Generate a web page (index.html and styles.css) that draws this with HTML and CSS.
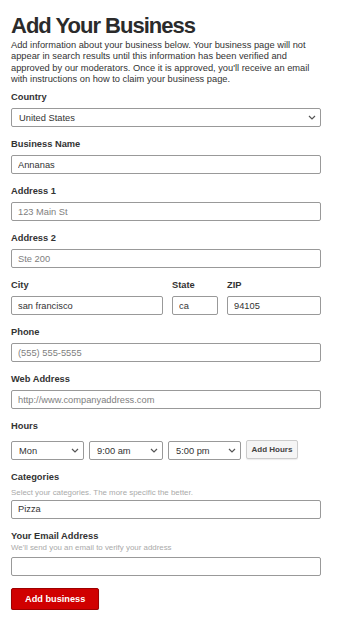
FILE: index.html
```html
<!DOCTYPE html>
<html lang="en">
<head>
<meta charset="utf-8">
<title>Add Your Business</title>
<link rel="stylesheet" href="styles.css">
</head>
<body>
<div class="page">
  <h1 class="title">Add Your Business</h1>
  <p class="intro">Add information about your business below. Your business page will not appear in search results until this information has been verified and approved by our moderators. Once it is approved, you'll receive an email with instructions on how to claim your business page.</p>
  <form class="form">
    <div class="field">
      <label class="label">Country</label>
      <div class="select-wrap">
        <select class="select"><option>United States</option></select>
        <svg class="chev" width="8" height="5" viewBox="0 0 8 5"><path d="M1 1 L4 4 L7 1" fill="none" stroke="#555" stroke-width="1.2"/></svg>
      </div>
    </div>
    <div class="field">
      <label class="label">Business Name</label>
      <input class="input" type="text" value="Annanas">
    </div>
    <div class="field">
      <label class="label">Address 1</label>
      <input class="input" type="text" placeholder="123 Main St">
    </div>
    <div class="field">
      <label class="label">Address 2</label>
      <input class="input" type="text" placeholder="Ste 200">
    </div>
    <div class="field city-row">
      <div class="col">
        <label class="label">City</label>
        <input class="input" type="text" value="san francisco">
      </div>
      <div class="col">
        <label class="label">State</label>
        <input class="input" type="text" value="ca">
      </div>
      <div class="col">
        <label class="label">ZIP</label>
        <input class="input" type="text" value="94105">
      </div>
    </div>
    <div class="field">
      <label class="label">Phone</label>
      <input class="input" type="text" placeholder="(555) 555-5555">
    </div>
    <div class="field">
      <label class="label">Web Address</label>
      <input class="input" type="text" placeholder="http://www.companyaddress.com">
    </div>
    <div class="field">
      <label class="label label-hours">Hours</label>
      <div class="hours-row">
        <div class="select-wrap w-day">
          <select class="select"><option>Mon</option></select>
          <svg class="chev" width="8" height="5" viewBox="0 0 8 5"><path d="M1 1 L4 4 L7 1" fill="none" stroke="#555" stroke-width="1.2"/></svg>
        </div>
        <div class="select-wrap w-open">
          <select class="select"><option>9:00 am</option></select>
          <svg class="chev" width="8" height="5" viewBox="0 0 8 5"><path d="M1 1 L4 4 L7 1" fill="none" stroke="#555" stroke-width="1.2"/></svg>
        </div>
        <div class="select-wrap w-close">
          <select class="select"><option>5:00 pm</option></select>
          <svg class="chev" width="8" height="5" viewBox="0 0 8 5"><path d="M1 1 L4 4 L7 1" fill="none" stroke="#555" stroke-width="1.2"/></svg>
        </div>
        <button class="btn-hours" type="button">Add Hours</button>
      </div>
    </div>
    <div class="field">
      <label class="label label-cat">Categories</label>
      <div class="hint hint-cat">Select your categories. The more specific the better.</div>
      <input class="input" type="text" value="Pizza">
    </div>
    <div class="field">
      <label class="label label-email">Your Email Address</label>
      <div class="hint hint-email">We'll send you an email to verify your address</div>
      <input class="input" type="text">
    </div>
    <button class="btn-submit" type="button">Add business</button>
  </form>
</div>
</body>
</html>
```

FILE: styles.css
```css
* { box-sizing: border-box; }

body {
  margin: 0;
  background: #fff;
  font-family: "Liberation Sans", Arial, sans-serif;
  color: #333;
}

.page {
  width: 321px;
  padding: 14px 0 0 11px;
}

.title {
  margin: 0;
  font-size: 22px;
  line-height: 24px;
  font-weight: bold;
  letter-spacing: -1px;
  color: #2b2b2b;
}

.intro {
  margin: 2px 0 7px;
  font-size: 9.3px;
  line-height: 11.3px;
  color: #333;
}

.form { margin: 0; }

.field { margin-bottom: 12px; }

.label {
  display: block;
  font-size: 9.3px;
  line-height: 11px;
  font-weight: bold;
  color: #333;
  margin-bottom: 5px;
}

.label-hours { margin-bottom: 9px; }
.label-cat { margin-bottom: 4.6px; }
.label-email { margin-bottom: 1px; }

.hint {
  font-size: 7.9px;
  line-height: 10px;
  color: #aaa;
}

.hint-cat { margin-bottom: 2px; }
.hint-email { margin-bottom: 4.5px; }

.input,
.select {
  display: block;
  width: 100%;
  height: 19px;
  margin: 0;
  border: 1px solid #999;
  border-radius: 2px;
  background: #fff;
  font-family: "Liberation Sans", Arial, sans-serif;
  font-size: 9.3px;
  color: #333;
  outline: none;
}

.input { padding: 0 6px; }

.input::placeholder { color: #808080; }

.select {
  -webkit-appearance: none;
  appearance: none;
  padding: 0 16px 0 7px;
}

.select-wrap { position: relative; }

.chev {
  position: absolute;
  right: 5px;
  top: 7px;
  pointer-events: none;
}

.city-row {
  display: grid;
  grid-template-columns: 152px 46px 94px;
  column-gap: 9px;
}

.hours-row {
  display: flex;
  align-items: flex-start;
  gap: 5px;
}

.w-day { width: 73px; }
.w-open { width: 74px; }
.w-close { width: 73px; }

.btn-hours {
  height: 19px;
  width: 52px;
  margin-top: -1px;
  padding: 0;
  border: 1px solid #ccc;
  border-radius: 2px;
  background: #f5f5f5;
  box-shadow: 0 1px 1px rgba(0, 0, 0, 0.08);
  font-family: "Liberation Sans", Arial, sans-serif;
  font-size: 8px;
  font-weight: bold;
  color: #444;
}

.btn-submit {
  display: block;
  height: 22px;
  margin-top: 1px;
  padding: 0 13px;
  border: 1px solid #9d0000;
  border-radius: 2px;
  background: #d00000;
  box-shadow: 0 1px 1px rgba(0, 0, 0, 0.35);
  font-family: "Liberation Sans", Arial, sans-serif;
  font-size: 9.2px;
  font-weight: bold;
  color: #fff;
}
```
